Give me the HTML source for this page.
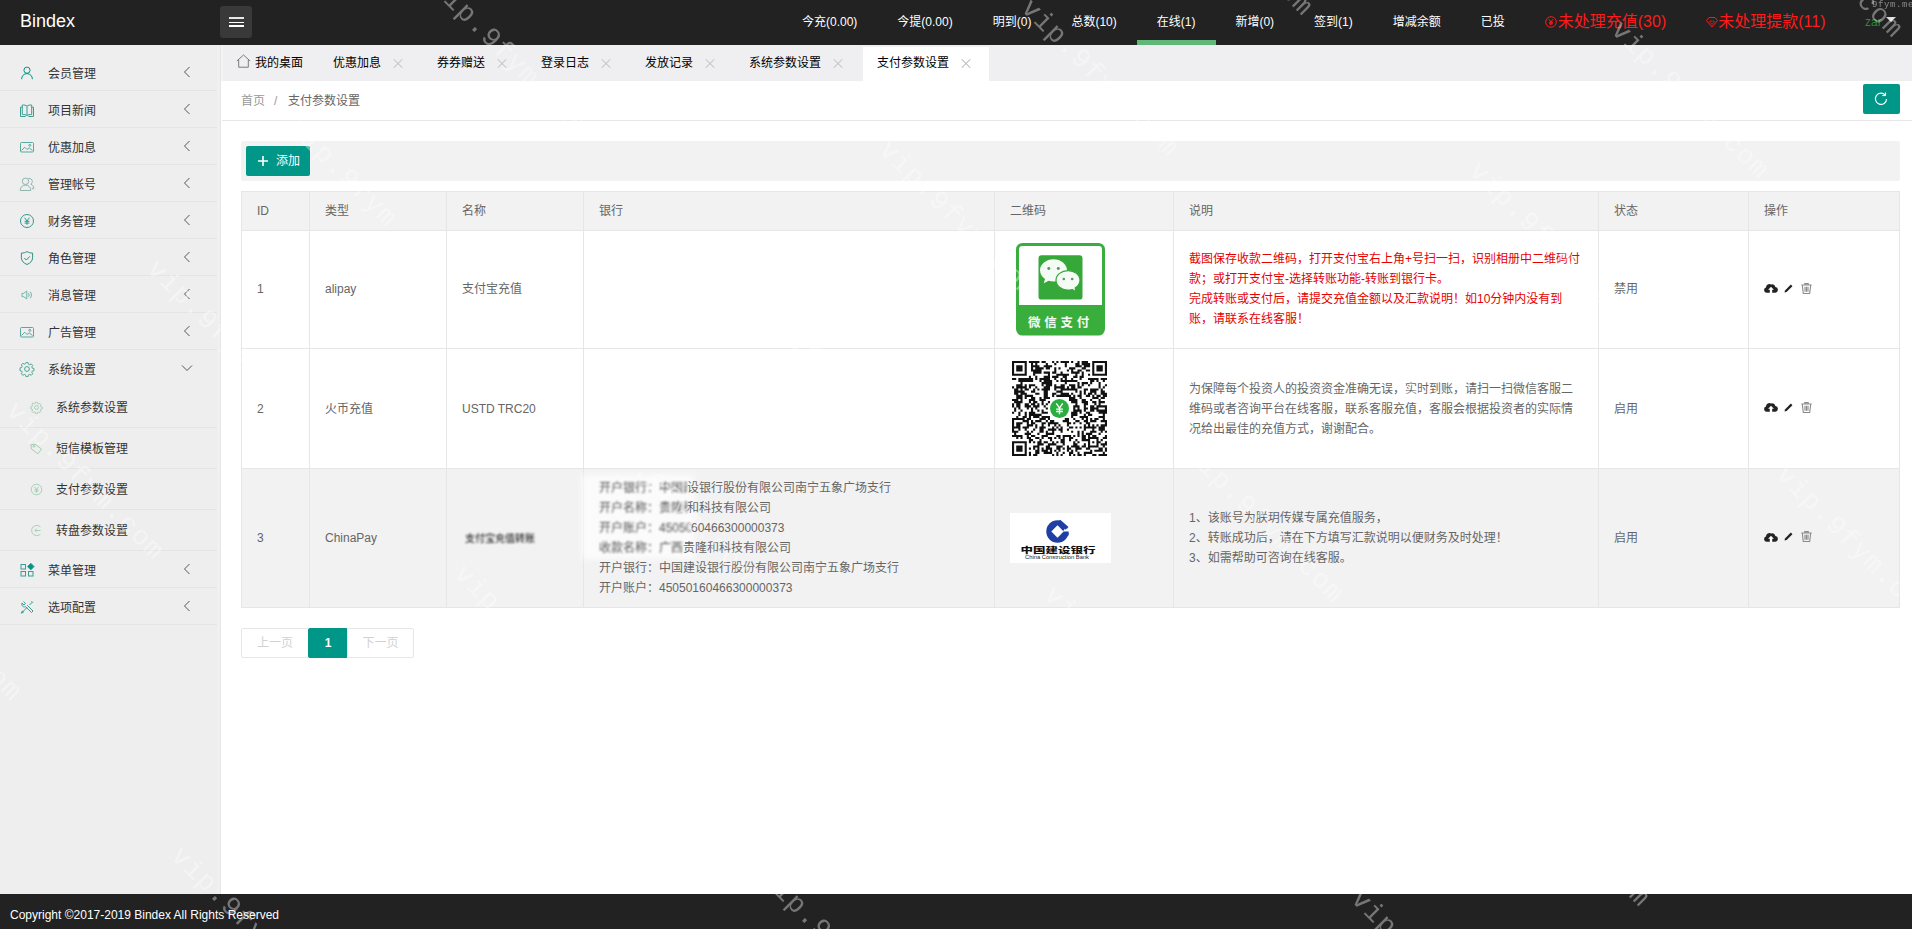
<!DOCTYPE html>
<html lang="zh-CN">
<head>
<meta charset="utf-8">
<title>Bindex</title>
<style>
*{box-sizing:border-box;margin:0;padding:0}
html,body{width:1912px;height:929px;overflow:hidden;background:#fff}
body{position:relative;font-family:"Liberation Sans","Noto Sans CJK SC",sans-serif;font-size:12px;color:#333;line-height:1}
ul{list-style:none}
.abs{position:absolute}
/* header */
#hd{position:absolute;left:0;top:0;width:1912px;height:45px;background:#222}
#logo{position:absolute;left:20px;top:0;line-height:42px;font-size:18px;color:#fff}
#burger{position:absolute;left:220px;top:6px;width:32px;height:32px;background:#393939;border-radius:3px}
#burger i{position:absolute;left:9px;width:15px;height:2px;background:#fff}
#nav{position:absolute;left:782px;top:0;height:45px;display:flex}
#nav li{padding:0 20px;line-height:45px;color:#fff;font-size:12px;white-space:nowrap;position:relative;height:45px}
#nav li.on:after{content:"";position:absolute;left:0;right:-1px;bottom:0;height:5px;background:#5fb878}
#nav li.red{color:#ff1a1a;font-size:16px;line-height:44px}
/* sidebar */
#side{position:absolute;left:0;top:45px;width:220px;height:849px;background:#eee}
#side .it{position:absolute;left:0;width:220px;height:37px;border-bottom:1px solid #e4e4e4}
#side .it span{position:absolute;left:48px;top:2px;line-height:37px;font-size:12px;color:#333}
#side .it svg.ic{position:absolute;left:19px;top:11px;width:16px;height:16px}
#side .it svg.ar{position:absolute;left:182px;top:12px;width:10px;height:12px}
#side .sub{position:absolute;left:0;width:220px;height:41px;border-bottom:1px solid #e4e4e4}
#side .sub span{position:absolute;left:56px;top:1px;line-height:41px;font-size:12px;color:#333}
#side .sub svg.ic{position:absolute;left:30px;top:14px;width:13px;height:13px}
/* tabs */
#tabs{position:absolute;left:221px;top:45px;width:1691px;height:36px;background:#efeef0;border-left:2px solid #f4f4f5}
#tabs ul{display:flex;height:35px;margin-left:-1px}
#tabs li{padding:2px 15px 0;line-height:35px;font-size:12px;color:#000;white-space:nowrap;height:35px;position:relative;display:flex;align-items:center}
#tabs li.on{background:#fff;height:34px;margin:2px 1px 0;padding:0 14px 1px;line-height:33px}
#tabs li .x{display:inline-block;width:18px;height:18px;margin-left:8px;position:relative}
#tabs li .x:before,#tabs li .x:after{content:"";position:absolute;left:3px;top:8.5px;width:12px;height:1px;background:#c2c2c2;transform:rotate(45deg)}
#tabs li .x:after{transform:rotate(-45deg)}
#tabs li.on .x:before,#tabs li.on .x:after{background:#b5b5b5}
/* breadcrumb */
#bc{position:absolute;left:222px;top:81px;width:1690px;height:40px;background:#fff;border-bottom:1px solid #e6e6e6}
#bc .t{position:absolute;top:0;line-height:40px;font-size:12px}
#refresh{position:absolute;left:1863px;top:84px;width:37px;height:30px;background:#009688;border-radius:2px}
/* toolbar */
#tb{position:absolute;left:241px;top:141px;width:1659px;height:40px;background:#f2f2f2;border-radius:2px}
#add{position:absolute;left:246px;top:146px;width:64px;height:30px;background:#009688;border-radius:2px;color:#fff;font-size:12px;line-height:30px}
/* table */
#tbl{position:absolute;left:241px;top:191px;width:1658px;border-collapse:collapse;table-layout:fixed;font-size:12px;color:#666}
#tbl th,#tbl td{border:1px solid #e6e6e6;padding:0 15px;text-align:left;font-weight:normal;vertical-align:middle;line-height:20px}
#tbl th{background:#f2f2f2;height:39px}
#tbl tr.h td{background:#f2f2f2}
#tbl tr.r1 td{padding-bottom:2px}
#tbl tr.r1 .ops{top:-.5px}
.red{color:#e60000}
#tbl td.im{position:relative;padding:0}
.ops{display:flex;align-items:center;position:relative;top:-1.5px}
.bl{display:inline-block;overflow:hidden;white-space:nowrap;vertical-align:top;height:20px;filter:blur(1px);opacity:.85;color:#333;position:relative}
.blur1{display:inline-block;filter:blur(.9px);font-size:10px;color:#000;white-space:nowrap;position:relative;left:3px}
#tbl td.bank{position:relative}
.smear{position:absolute;left:-2px;top:6px;width:112px;height:84px;background:#fff;opacity:.75;filter:blur(3px)}
.bank .tx{position:relative}
/* pager */
#pg{position:absolute;left:241px;top:628px;height:30px;display:flex;font-size:12px}
#pg div{height:30px;line-height:28px;border:1px solid #e6e6e6;margin-left:-1px;color:#d2d2d2;text-align:center;background:#fff}
#pg div.cur{background:#009688;color:#fff;border-color:#009688;font-weight:bold;border-radius:2px}
#pg div:first-child{border-radius:2px 0 0 2px}
#pg div:last-child{border-radius:0 2px 2px 0}
/* footer */
#ft{position:absolute;left:0;top:894px;width:1912px;height:35px;background:#222;color:#fff;font-size:12px;line-height:43px;padding-left:10px}
.wm{position:absolute;font-family:"Liberation Mono",monospace;font-size:27px;letter-spacing:1.4px;line-height:28px;color:#fff;transform-origin:0 50%;transform:rotate(45deg);white-space:nowrap;pointer-events:none}
#wms{position:absolute;left:0;top:0;width:1912px;height:929px;overflow:hidden;pointer-events:none}
#wms{position:absolute;left:0;top:0;width:1912px;height:929px;overflow:hidden;pointer-events:none}
</style>
</head>
<body>
<div id="hd">
  <div id="logo">Bindex</div>
  <div id="burger"><i style="top:11px;height:2px;opacity:.88"></i><i style="top:15.5px;height:1.3px"></i><i style="top:19.3px;height:1.3px"></i></div>
  <ul id="nav">
    <li>今充(0.00)</li><li>今提(0.00)</li><li>明到(0)</li><li>总数(10)</li><li class="on">在线(1)</li><li>新增(0)</li><li>签到(1)</li><li>增减余额</li><li>已投</li><li class="red"><svg viewBox="0 0 12 12" style="width:12px;height:12px;vertical-align:-1px;margin-right:1px" fill="none" stroke="#ff1a1a" stroke-width="1"><circle cx="6" cy="6" r="5.300"/><path d="M4 3.300L6 6l2-2.700M6 6v3.300M4 6.300h4M4 7.800h4"/></svg>未处理充值(30)</li><li class="red"><svg viewBox="0 0 12 12" style="width:12px;height:12px;vertical-align:-1px;margin-right:0px" fill="none" stroke="#ff1a1a" stroke-width="1"><path d="M3 1.500h6l2.500 3L6 11 0.500 4.500z"/><path d="M6 8.500L4 6.300c-.6-.9.300-1.900 1.100-1.500.4.200.7.500.9.900.2-.4.500-.7.900-.9.800-.4 1.700.6 1.100 1.500z" stroke-width=".8"/></svg>未处理提款(11)</li>
  </ul>
  <div class="abs" style="left:1865px;top:15px;font-size:12px;color:#2a8a38;line-height:14px">zar</div>
  <div class="abs" style="left:1886px;top:17px;width:0;height:0;border:5px solid transparent;border-top:5px solid #ddd"></div>
</div>
<div id="side">
<div class="it" style="top:9px"><svg class="ic" viewBox="0 0 16 16" fill="none" stroke="#009688" stroke-width="1"><circle cx="8" cy="5.2" r="3.1"/><path d="M2.6 14.2c0-3.2 2.3-5.6 5.4-5.6s5.4 2.4 5.4 5.6"/></svg><span>会员管理</span><svg class="ar" viewBox="0 0 10 12"><path d="M7.500 1L2.500 6l5 5" fill="none" stroke="#555" stroke-width="1"/></svg></div>
<div class="it" style="top:46px"><svg class="ic" viewBox="0 0 16 16" fill="none" stroke="#3a9d94" stroke-width="1"><path d="M8 4.2v9.3M8 4.2C7 3.2 5.2 2.8 3.3 3v9.6c1.9-.2 3.7.2 4.7.9M8 4.2c1-1 2.8-1.4 4.7-1.2v9.6c-1.900-.2-3.700.2-4.700.9M3.300 5.200H1.500v9.300h5.100M12.700 5.200h1.800v9.300h-5.100"/></svg><span>项目新闻</span><svg class="ar" viewBox="0 0 10 12"><path d="M7.500 1L2.500 6l5 5" fill="none" stroke="#555" stroke-width="1"/></svg></div>
<div class="it" style="top:83px"><svg class="ic" viewBox="0 0 16 16" fill="none" stroke="#5aa9a1" stroke-width="1"><rect x="1.500" y="3.500" width="13" height="9.500" rx="1"/><path d="M2.500 11.500l3.200-3.300 2.300 2.300 2.200-1.600 3.300 2.600"/><circle cx="10.800" cy="6.300" r="1"/></svg><span>优惠加息</span><svg class="ar" viewBox="0 0 10 12"><path d="M7.500 1L2.500 6l5 5" fill="none" stroke="#555" stroke-width="1"/></svg></div>
<div class="it" style="top:120px"><svg class="ic" viewBox="0 0 16 16" fill="none" stroke="#8fb5ae" stroke-width="1"><circle cx="6.500" cy="5.300" r="3.200"/><path d="M1.200 14.500c0-3 2-5.400 5.300-5.400s5.300 2.400 5.300 5.400zM9.300 2.500c2.400-.5 4 1 4 2.900 0 1.300-.6 2.200-1.500 2.800 1.800.6 3 2.200 3 4.500h-2"/></svg><span>管理帐号</span><svg class="ar" viewBox="0 0 10 12"><path d="M7.500 1L2.500 6l5 5" fill="none" stroke="#555" stroke-width="1"/></svg></div>
<div class="it" style="top:157px"><svg class="ic" viewBox="0 0 16 16" fill="none" stroke="#2f9b8e" stroke-width="1"><circle cx="8" cy="8" r="6.500"/><path d="M5.600 4.700L8 8l2.400-3.300M8 8v3.800M5.600 8.300h4.800M5.600 10.100h4.800"/></svg><span>财务管理</span><svg class="ar" viewBox="0 0 10 12"><path d="M7.500 1L2.500 6l5 5" fill="none" stroke="#555" stroke-width="1"/></svg></div>
<div class="it" style="top:194px"><svg class="ic" viewBox="0 0 16 16" fill="none" stroke="#2f8f80" stroke-width="1"><path d="M8 1.600c1.700 1 3.600 1.500 5.600 1.500v4.600c0 3.100-2.200 5.500-5.600 6.800-3.400-1.300-5.600-3.700-5.600-6.800V3.100c2 0 3.900-.5 5.600-1.500z"/><path d="M5.300 8l2 2 3.500-3.600"/></svg><span>角色管理</span><svg class="ar" viewBox="0 0 10 12"><path d="M7.500 1L2.500 6l5 5" fill="none" stroke="#555" stroke-width="1"/></svg></div>
<div class="it" style="top:231px"><svg class="ic" viewBox="0 0 16 16" fill="none" stroke="#6fb3a8" stroke-width="1"><path d="M3 6.300h1.800L7.800 4v8L4.800 9.700H3z"/><path d="M9.500 6.200c.8.900.8 2.700 0 3.600M11.200 4.700c1.600 1.700 1.600 4.900 0 6.600"/></svg><span>消息管理</span><svg class="ar" viewBox="0 0 10 12"><path d="M7.500 1L2.500 6l5 5" fill="none" stroke="#555" stroke-width="1"/></svg></div>
<div class="it" style="top:268px"><svg class="ic" viewBox="0 0 16 16" fill="none" stroke="#5aa9a1" stroke-width="1"><rect x="1.500" y="3.500" width="13" height="9.500" rx="1"/><path d="M2.500 11.500l3.200-3.300 2.300 2.300 2.200-1.600 3.300 2.600"/><circle cx="10.800" cy="6.300" r="1"/></svg><span>广告管理</span><svg class="ar" viewBox="0 0 10 12"><path d="M7.500 1L2.500 6l5 5" fill="none" stroke="#555" stroke-width="1"/></svg></div>
<div class="it" style="top:305px;border-bottom:0"><svg class="ic" viewBox="0 0 16 16" fill="none" stroke="#4aa896" stroke-width="1"><circle cx="8" cy="8" r="2.400"/><path d="M6.900 1.600h2.200l.4 1.700 1.200.5 1.500-.9 1.500 1.500-.9 1.500.5 1.200 1.700.4v2.200l-1.700.4-.5 1.200.9 1.500-1.500 1.500-1.500-.9-1.200.5-.4 1.700H6.900l-.4-1.700-1.200-.5-1.500.9-1.500-1.500.9-1.500-.5-1.200-1.700-.4V6.900l1.700-.4.500-1.200-.9-1.500 1.500-1.500 1.500.9 1.200-.5z"/></svg><span>系统设置</span><svg class="ar" style="width:12px;height:10px;left:181px;top:13px" viewBox="0 0 12 10"><path d="M1 2.500l5 5 5-5" fill="none" stroke="#555" stroke-width="1"/></svg></div>
<div class="sub" style="top:342px"><svg class="ic" viewBox="0 0 16 16" fill="none" stroke="#9ccdb0" stroke-width="1.100"><circle cx="8" cy="8" r="2.400"/><path d="M6.900 1.600h2.200l.4 1.700 1.200.5 1.500-.9 1.500 1.500-.9 1.500.5 1.200 1.700.4v2.200l-1.700.4-.5 1.200.9 1.500-1.500 1.500-1.500-.9-1.200.5-.4 1.700H6.900l-.4-1.700-1.200-.5-1.500.9-1.500-1.500.9-1.500-.5-1.200-1.700-.4V6.900l1.700-.4.500-1.200-.9-1.500 1.500-1.500 1.500.9 1.200-.5z"/></svg><span>系统参数设置</span></div>
<div class="sub" style="top:383px"><svg class="ic" viewBox="0 0 16 16" fill="none" stroke="#9ccdb0" stroke-width="1.100"><path d="M1.800 2.500h5.200l7 7-5.200 5.200-7-7z" transform="rotate(-8 8 8)"/><circle cx="4.800" cy="5.200" r="1.200"/></svg><span>短信模板管理</span></div>
<div class="sub" style="top:424px"><svg class="ic" viewBox="0 0 16 16" fill="none" stroke="#9ccdb0" stroke-width="1.100"><circle cx="8" cy="8" r="6.500"/><path d="M5.600 4.700L8 8l2.400-3.300M8 8v3.800M5.600 8.300h4.800M5.600 10.100h4.800"/></svg><span>支付参数设置</span></div>
<div class="sub" style="top:465px"><svg class="ic" viewBox="0 0 16 16" fill="none" stroke="#9ccdb0" stroke-width="1.100"><path d="M12.800 3.600A6.300 6.300 0 1 0 12.800 12.400"/><path d="M6 8h7M6 8l2.200-2M6 8l2.200 2"/></svg><span>转盘参数设置</span></div>
<div class="it" style="top:506px"><svg class="ic" viewBox="0 0 16 16" fill="none" stroke="#3a9d94" stroke-width="1"><rect x="2" y="2.500" width="4.500" height="4.500"/><rect x="2" y="9.500" width="4.500" height="4.500"/><rect x="9.500" y="9.500" width="4.500" height="4.500"/><path d="M11.800 1.300l3.300 3.300-3.300 3.300-3.300-3.300z" fill="#009688"/></svg><span>菜单管理</span><svg class="ar" viewBox="0 0 10 12"><path d="M7.500 1L2.500 6l5 5" fill="none" stroke="#555" stroke-width="1"/></svg></div>
<div class="it" style="top:543px"><svg class="ic" viewBox="0 0 16 16" fill="none" stroke="#3a9d94" stroke-width="1"><path d="M3 13.500l5-5M10.500 6l3.200-3.200M4.500 2.500l2 2-1.500 1.500-2-2c-.5 1.500 0 2.800 1 3.500 1 .6 2 .5 2.700.2l5.800 5.800 1.500-1.500-5.800-5.800M2.300 14.200l1-2.200 1.200 1.200zM12.500 2.300l1.200 1.200"/></svg><span>选项配置</span><svg class="ar" viewBox="0 0 10 12"><path d="M7.500 1L2.500 6l5 5" fill="none" stroke="#555" stroke-width="1"/></svg></div>
</div><!--/side-->
<div class="abs" style="left:217px;top:45px;width:3px;height:849px;background:#f0f0f0"></div><div class="abs" style="left:220px;top:45px;width:1px;height:849px;background:#e6e6e6"></div>
<div id="tabs"><ul>
  <li><svg viewBox="0 0 14 13" style="width:15px;height:14px;margin-right:4px;margin-left:-1px;margin-top:-5px" fill="none" stroke="#777" stroke-width=".9"><path d="M0.800 6.500L7 0.900l6.200 5.600M2.500 5.200v7.100h9V5.200"/></svg>我的桌面</li>
  <li>优惠加息<i class="x"></i></li>
  <li>券券赠送<i class="x"></i></li>
  <li>登录日志<i class="x"></i></li>
  <li>发放记录<i class="x"></i></li>
  <li>系统参数设置<i class="x"></i></li>
  <li class="on">支付参数设置<i class="x"></i></li>
</ul></div>
<div id="bc"><span class="t" style="left:19px;color:#999">首页</span><span class="t" style="left:52px;color:#999">/</span><span class="t" style="left:66px;color:#666">支付参数设置</span></div>
<div id="refresh"><svg viewBox="0 0 14 14" style="position:absolute;left:11px;top:8px;width:14px;height:14px" fill="none" stroke="#fff" stroke-width="1.200"><path d="M11.300 3.200A5.600 5.600 0 1 0 12.600 7"/><path d="M8.300 3.600h3.300V0.400" stroke-width="1"/></svg></div>
<div id="tb"></div>
<div id="add"><svg viewBox="0 0 10 10" style="position:absolute;left:12px;top:10px;width:10px;height:10px"><path d="M5 0v10M0 5h10" stroke="#fff" stroke-width="1.600"/></svg><span style="position:absolute;left:30px">添加</span></div>
<table id="tbl">
<colgroup><col style="width:68px"><col style="width:137px"><col style="width:137px"><col style="width:411px"><col style="width:179px"><col style="width:425px"><col style="width:150px"><col style="width:151px"></colgroup>
<tr><th>ID</th><th>类型</th><th>名称</th><th>银行</th><th>二维码</th><th>说明</th><th>状态</th><th>操作</th></tr>
<tr class="r1" style="height:118px"><td>1</td><td>alipay</td><td>支付宝充值</td><td></td><td class="im"><!--WX--><svg class="abs" style="left:21px;top:12px;width:89px;height:92.5px" viewBox="0 0 89 94" preserveAspectRatio="none"><rect x="1.500" y="1.500" width="86" height="91" rx="5" fill="#fff" stroke="#3aae3c" stroke-width="3"/><path d="M1.500 63h86v24.500a5 5 0 0 1-5 5h-76a5 5 0 0 1-5-5z" fill="#3aae3c"/><rect x="22.500" y="12.500" width="44" height="45" rx="3" fill="#36a83a"/><path d="M37.500 16.500c-7.500 0-13.500 5-13.500 11.300 0 3.600 2 6.800 5.100 8.900l-1.400 4.300 5-2.600c1.500.4 3.100.7 4.800.7 7.500 0 13.500-5 13.500-11.300S45 16.500 37.500 16.500z" fill="#f4fbf4"/><path d="M52 28c-6.600 0-12 4.400-12 9.900s5.400 9.900 12 9.900c1.400 0 2.800-.2 4-.6l4.300 2.300-1.200-3.700c2.900-1.800 4.900-4.700 4.900-7.900 0-5.500-5.400-9.900-12-9.900z" fill="#f4fbf4" stroke="#36a83a" stroke-width="1.200"/><circle cx="32.800" cy="26" r="1.500" fill="#5f8f62"/><circle cx="42.300" cy="26" r="1.500" fill="#5f8f62"/><circle cx="47.800" cy="36.500" r="1.300" fill="#5f8f62"/><circle cx="56.200" cy="36.500" r="1.300" fill="#5f8f62"/><text x="44.500" y="85" text-anchor="middle" font-family="'Liberation Sans','Noto Sans CJK SC',sans-serif" font-weight="bold" font-size="12.500" letter-spacing="3.800" fill="#f2faf2">微信支付</text></svg><!--/WX--></td><td class="red"><div>截图保存收款二维码，打开支付宝右上角+号扫一扫，识别相册中二维码付款；或打开支付宝-选择转账功能-转账到银行卡。<br>完成转账或支付后，请提交充值金额以及汇款说明！如10分钟内没有到账，请联系在线客服！</div></td><td>禁用</td><td><span class="ops"><svg viewBox="0 0 14 10" style="width:14px;height:10px"><path d="M11.300 4.100A3 3 0 0 0 7.200 1.600 3.400 3.400 0 0 0 2 4.600 2.600 2.600 0 0 0 2.700 9.700h8.200a2.800 2.800 0 0 0 .4-5.600z" fill="#222"/><path d="M7 3.800l2.900 3H8.200V10H5.800V6.800H4.100z" fill="#fff"/></svg><svg viewBox="0 0 10 10" style="width:9px;height:9px;margin-left:6px"><path d="M0.600 9.400l.5-2.300L7.600.6l1.800 1.800-6.500 6.500z" fill="#222"/></svg><svg viewBox="0 0 11 11" style="width:11px;height:11px;margin-left:8px"><path d="M0.300 2h10.400M3.800 1.700V.6h3.400v1.100M1.300 2.300l1 8.200h6.400l1-8.200M4 3.800v5M5.500 3.800v5M7 3.800v5" fill="none" stroke="#8a8a8a" stroke-width="1.100"/></svg></span></td></tr>
<tr style="height:120px"><td>2</td><td>火币充值</td><td>USTD TRC20</td><td></td><td class="im"><!--QR--><svg class="abs" style="left:17px;top:11.5px;width:95px;height:95px;filter:blur(.4px)" viewBox="0 0 45 45" shape-rendering="auto"><rect width="45" height="45" fill="#fff"/><path d="M0 0h7v1h-7zM8 0h5v1h-5zM14 0h2v1h-2zM19 0h1v1h-1zM21 0h1v1h-1zM23 0h4v1h-4zM28 0h1v1h-1zM31 0h1v1h-1zM33 0h3v1h-3zM38 0h7v1h-7zM0 1h1v1h-1zM6 1h1v1h-1zM9 1h1v1h-1zM11 1h1v1h-1zM16 1h1v1h-1zM20 1h1v1h-1zM25 1h1v1h-1zM30 1h2v1h-2zM33 1h4v1h-4zM38 1h1v1h-1zM44 1h1v1h-1zM0 2h1v1h-1zM2 2h3v1h-3zM6 2h1v1h-1zM9 2h4v1h-4zM15 2h4v1h-4zM25 2h1v1h-1zM30 2h3v1h-3zM34 2h3v1h-3zM38 2h1v1h-1zM40 2h3v1h-3zM44 2h1v1h-1zM0 3h1v1h-1zM2 3h3v1h-3zM6 3h1v1h-1zM9 3h1v1h-1zM11 3h4v1h-4zM16 3h2v1h-2zM20 3h1v1h-1zM22 3h1v1h-1zM27 3h3v1h-3zM33 3h2v1h-2zM38 3h1v1h-1zM40 3h3v1h-3zM44 3h1v1h-1zM0 4h1v1h-1zM2 4h3v1h-3zM6 4h1v1h-1zM9 4h5v1h-5zM20 4h1v1h-1zM26 4h1v1h-1zM28 4h1v1h-1zM31 4h2v1h-2zM35 4h2v1h-2zM38 4h1v1h-1zM40 4h3v1h-3zM44 4h1v1h-1zM0 5h1v1h-1zM6 5h1v1h-1zM10 5h4v1h-4zM15 5h3v1h-3zM19 5h2v1h-2zM23 5h1v1h-1zM28 5h4v1h-4zM33 5h1v1h-1zM38 5h1v1h-1zM44 5h1v1h-1zM0 6h7v1h-7zM10 6h1v1h-1zM17 6h1v1h-1zM21 6h6v1h-6zM30 6h1v1h-1zM33 6h1v1h-1zM36 6h1v1h-1zM38 6h7v1h-7zM8 7h1v1h-1zM11 7h1v1h-1zM15 7h3v1h-3zM19 7h3v1h-3zM24 7h2v1h-2zM29 7h2v1h-2zM32 7h2v1h-2zM0 8h2v1h-2zM3 8h7v1h-7zM11 8h1v1h-1zM13 8h5v1h-5zM20 8h1v1h-1zM23 8h1v1h-1zM25 8h1v1h-1zM28 8h1v1h-1zM32 8h1v1h-1zM36 8h5v1h-5zM42 8h3v1h-3zM3 9h7v1h-7zM13 9h1v1h-1zM15 9h4v1h-4zM21 9h1v1h-1zM23 9h8v1h-8zM37 9h2v1h-2zM40 9h1v1h-1zM43 9h1v1h-1zM4 10h1v1h-1zM14 10h5v1h-5zM25 10h1v1h-1zM31 10h1v1h-1zM33 10h3v1h-3zM37 10h1v1h-1zM41 10h1v1h-1zM2 11h3v1h-3zM6 11h1v1h-1zM8 11h3v1h-3zM14 11h1v1h-1zM16 11h3v1h-3zM20 11h1v1h-1zM23 11h2v1h-2zM27 11h3v1h-3zM31 11h1v1h-1zM33 11h1v1h-1zM36 11h1v1h-1zM41 11h1v1h-1zM44 11h1v1h-1zM0 12h1v1h-1zM2 12h5v1h-5zM8 12h1v1h-1zM11 12h1v1h-1zM15 12h3v1h-3zM20 12h5v1h-5zM26 12h1v1h-1zM28 12h2v1h-2zM31 12h2v1h-2zM41 12h1v1h-1zM43 12h1v1h-1zM1 13h2v1h-2zM4 13h1v1h-1zM6 13h2v1h-2zM10 13h1v1h-1zM12 13h1v1h-1zM14 13h4v1h-4zM20 13h1v1h-1zM23 13h8v1h-8zM34 13h2v1h-2zM37 13h4v1h-4zM42 13h1v1h-1zM1 14h5v1h-5zM9 14h2v1h-2zM15 14h2v1h-2zM21 14h3v1h-3zM30 14h1v1h-1zM32 14h1v1h-1zM34 14h1v1h-1zM37 14h3v1h-3zM42 14h2v1h-2zM1 15h2v1h-2zM4 15h3v1h-3zM11 15h2v1h-2zM15 15h2v1h-2zM19 15h2v1h-2zM23 15h4v1h-4zM28 15h1v1h-1zM32 15h1v1h-1zM34 15h1v1h-1zM36 15h2v1h-2zM39 15h1v1h-1zM42 15h3v1h-3zM2 16h3v1h-3zM6 16h4v1h-4zM15 16h2v1h-2zM19 16h1v1h-1zM21 16h7v1h-7zM29 16h1v1h-1zM31 16h2v1h-2zM35 16h2v1h-2zM38 16h1v1h-1zM40 16h2v1h-2zM43 16h2v1h-2zM2 17h3v1h-3zM6 17h1v1h-1zM9 17h2v1h-2zM13 17h1v1h-1zM15 17h3v1h-3zM27 17h3v1h-3zM32 17h1v1h-1zM38 17h3v1h-3zM42 17h2v1h-2zM0 18h3v1h-3zM4 18h1v1h-1zM8 18h3v1h-3zM13 18h3v1h-3zM27 18h4v1h-4zM33 18h2v1h-2zM37 18h1v1h-1zM41 18h1v1h-1zM1 19h4v1h-4zM8 19h1v1h-1zM10 19h2v1h-2zM14 19h1v1h-1zM17 19h1v1h-1zM28 19h3v1h-3zM33 19h3v1h-3zM38 19h2v1h-2zM41 19h3v1h-3zM0 20h1v1h-1zM2 20h2v1h-2zM6 20h2v1h-2zM9 20h2v1h-2zM12 20h1v1h-1zM14 20h1v1h-1zM16 20h1v1h-1zM30 20h1v1h-1zM34 20h2v1h-2zM39 20h1v1h-1zM41 20h1v1h-1zM0 21h1v1h-1zM2 21h2v1h-2zM6 21h3v1h-3zM10 21h3v1h-3zM15 21h1v1h-1zM29 21h3v1h-3zM34 21h1v1h-1zM37 21h2v1h-2zM40 21h5v1h-5zM1 22h1v1h-1zM3 22h1v1h-1zM7 22h1v1h-1zM9 22h1v1h-1zM11 22h1v1h-1zM16 22h1v1h-1zM29 22h1v1h-1zM31 22h1v1h-1zM34 22h2v1h-2zM37 22h4v1h-4zM44 22h1v1h-1zM1 23h1v1h-1zM4 23h1v1h-1zM9 23h1v1h-1zM12 23h1v1h-1zM14 23h1v1h-1zM29 23h4v1h-4zM34 23h1v1h-1zM37 23h2v1h-2zM40 23h5v1h-5zM0 24h1v1h-1zM3 24h1v1h-1zM6 24h1v1h-1zM8 24h3v1h-3zM14 24h3v1h-3zM28 24h3v1h-3zM32 24h1v1h-1zM35 24h2v1h-2zM41 24h4v1h-4zM3 25h1v1h-1zM6 25h1v1h-1zM8 25h6v1h-6zM28 25h3v1h-3zM34 25h1v1h-1zM36 25h2v1h-2zM43 25h1v1h-1zM2 26h1v1h-1zM5 26h2v1h-2zM8 26h1v1h-1zM10 26h3v1h-3zM14 26h4v1h-4zM28 26h1v1h-1zM32 26h4v1h-4zM41 26h3v1h-3zM0 27h6v1h-6zM7 27h2v1h-2zM13 27h3v1h-3zM17 27h1v1h-1zM25 27h2v1h-2zM29 27h1v1h-1zM33 27h1v1h-1zM35 27h1v1h-1zM37 27h1v1h-1zM39 27h2v1h-2zM43 27h1v1h-1zM0 28h1v1h-1zM5 28h3v1h-3zM9 28h1v1h-1zM11 28h3v1h-3zM16 28h1v1h-1zM18 28h2v1h-2zM24 28h3v1h-3zM30 28h2v1h-2zM34 28h2v1h-2zM37 28h3v1h-3zM42 28h3v1h-3zM0 29h1v1h-1zM2 29h3v1h-3zM7 29h1v1h-1zM9 29h2v1h-2zM14 29h2v1h-2zM17 29h5v1h-5zM26 29h2v1h-2zM29 29h1v1h-1zM32 29h1v1h-1zM35 29h2v1h-2zM44 29h1v1h-1zM0 30h1v1h-1zM2 30h2v1h-2zM7 30h3v1h-3zM11 30h1v1h-1zM14 30h1v1h-1zM17 30h1v1h-1zM20 30h1v1h-1zM22 30h1v1h-1zM26 30h1v1h-1zM34 30h1v1h-1zM36 30h1v1h-1zM38 30h1v1h-1zM40 30h1v1h-1zM42 30h3v1h-3zM0 31h4v1h-4zM5 31h3v1h-3zM11 31h1v1h-1zM13 31h3v1h-3zM19 31h1v1h-1zM21 31h1v1h-1zM23 31h1v1h-1zM27 31h2v1h-2zM30 31h1v1h-1zM32 31h1v1h-1zM34 31h6v1h-6zM41 31h3v1h-3zM0 32h1v1h-1zM3 32h1v1h-1zM6 32h1v1h-1zM10 32h1v1h-1zM13 32h2v1h-2zM17 32h4v1h-4zM22 32h2v1h-2zM26 32h1v1h-1zM34 32h1v1h-1zM38 32h1v1h-1zM41 32h3v1h-3zM0 33h3v1h-3zM7 33h1v1h-1zM9 33h1v1h-1zM13 33h2v1h-2zM16 33h1v1h-1zM19 33h1v1h-1zM23 33h1v1h-1zM28 33h1v1h-1zM31 33h1v1h-1zM33 33h1v1h-1zM37 33h3v1h-3zM42 33h1v1h-1zM44 33h1v1h-1zM1 34h1v1h-1zM6 34h3v1h-3zM12 34h1v1h-1zM16 34h4v1h-4zM31 34h1v1h-1zM33 34h1v1h-1zM35 34h3v1h-3zM41 34h1v1h-1zM0 35h5v1h-5zM7 35h1v1h-1zM9 35h2v1h-2zM14 35h3v1h-3zM21 35h2v1h-2zM24 35h4v1h-4zM29 35h1v1h-1zM31 35h1v1h-1zM33 35h2v1h-2zM36 35h1v1h-1zM38 35h2v1h-2zM44 35h1v1h-1zM2 36h1v1h-1zM4 36h1v1h-1zM7 36h2v1h-2zM11 36h2v1h-2zM14 36h1v1h-1zM17 36h2v1h-2zM20 36h1v1h-1zM22 36h1v1h-1zM24 36h1v1h-1zM27 36h2v1h-2zM33 36h2v1h-2zM36 36h5v1h-5zM43 36h2v1h-2zM8 37h2v1h-2zM13 37h1v1h-1zM18 37h1v1h-1zM23 37h2v1h-2zM27 37h1v1h-1zM30 37h1v1h-1zM33 37h4v1h-4zM40 37h1v1h-1zM42 37h1v1h-1zM0 38h7v1h-7zM8 38h1v1h-1zM10 38h1v1h-1zM12 38h2v1h-2zM15 38h2v1h-2zM19 38h1v1h-1zM21 38h1v1h-1zM23 38h2v1h-2zM29 38h1v1h-1zM31 38h1v1h-1zM36 38h1v1h-1zM38 38h1v1h-1zM40 38h2v1h-2zM44 38h1v1h-1zM0 39h1v1h-1zM6 39h1v1h-1zM12 39h3v1h-3zM17 39h4v1h-4zM24 39h1v1h-1zM29 39h2v1h-2zM34 39h1v1h-1zM36 39h1v1h-1zM40 39h1v1h-1zM42 39h3v1h-3zM0 40h1v1h-1zM2 40h3v1h-3zM6 40h1v1h-1zM10 40h3v1h-3zM16 40h2v1h-2zM21 40h3v1h-3zM26 40h1v1h-1zM28 40h4v1h-4zM33 40h2v1h-2zM36 40h5v1h-5zM43 40h1v1h-1zM0 41h1v1h-1zM2 41h3v1h-3zM6 41h1v1h-1zM8 41h1v1h-1zM10 41h1v1h-1zM12 41h1v1h-1zM14 41h1v1h-1zM16 41h3v1h-3zM21 41h2v1h-2zM24 41h1v1h-1zM26 41h2v1h-2zM30 41h3v1h-3zM35 41h2v1h-2zM41 41h2v1h-2zM44 41h1v1h-1zM0 42h1v1h-1zM2 42h3v1h-3zM6 42h1v1h-1zM11 42h2v1h-2zM14 42h3v1h-3zM18 42h1v1h-1zM20 42h1v1h-1zM22 42h1v1h-1zM26 42h1v1h-1zM28 42h1v1h-1zM30 42h1v1h-1zM37 42h1v1h-1zM39 42h4v1h-4zM44 42h1v1h-1zM0 43h1v1h-1zM6 43h1v1h-1zM8 43h1v1h-1zM11 43h2v1h-2zM15 43h4v1h-4zM21 43h1v1h-1zM24 43h1v1h-1zM27 43h2v1h-2zM31 43h1v1h-1zM34 43h4v1h-4zM43 43h1v1h-1zM0 44h7v1h-7zM8 44h1v1h-1zM10 44h2v1h-2zM19 44h1v1h-1zM21 44h1v1h-1zM23 44h1v1h-1zM27 44h1v1h-1zM29 44h1v1h-1zM31 44h2v1h-2zM34 44h1v1h-1zM38 44h2v1h-2zM41 44h4v1h-4z" fill="#111"/><circle cx="22.500" cy="22.500" r="5.100" fill="#fff"/><circle cx="22.500" cy="22.500" r="4.500" fill="#2aae3f"/><path d="M21 20.100l1.500 2.200 1.500-2.200M22.500 22.300v2.900M20.900 22.800h3.200M20.900 23.900h3.200" stroke="#fff" stroke-width=".65" fill="none"/></svg><!--/QR--></td><td>为保障每个投资人的投资资金准确无误，实时到账，请扫一扫微信客服二维码或者咨询平台在线客服，联系客服充值，客服会根据投资者的实际情况给出最佳的充值方式，谢谢配合。</td><td>启用</td><td><span class="ops"><svg viewBox="0 0 14 10" style="width:14px;height:10px"><path d="M11.300 4.100A3 3 0 0 0 7.200 1.600 3.400 3.400 0 0 0 2 4.600 2.600 2.600 0 0 0 2.700 9.700h8.200a2.800 2.800 0 0 0 .4-5.600z" fill="#222"/><path d="M7 3.800l2.900 3H8.200V10H5.800V6.800H4.100z" fill="#fff"/></svg><svg viewBox="0 0 10 10" style="width:9px;height:9px;margin-left:6px"><path d="M0.600 9.400l.5-2.300L7.600.6l1.800 1.800-6.500 6.500z" fill="#222"/></svg><svg viewBox="0 0 11 11" style="width:11px;height:11px;margin-left:8px"><path d="M0.300 2h10.400M3.800 1.700V.6h3.400v1.100M1.300 2.300l1 8.200h6.400l1-8.200M4 3.800v5M5.500 3.800v5M7 3.800v5" fill="none" stroke="#8a8a8a" stroke-width="1.100"/></svg></span></td></tr>
<tr class="h" style="height:139px"><td>3</td><td>ChinaPay</td><td><span class="blur1">支付宝充值转账</span></td><td class="bank"><div class="smear"></div><div class="tx"><span class="bl" style="width:88px">开户银行：中国建</span>设银行股份有限公司南宁五象广场支行<br><span class="bl" style="width:88px">开户名称：贵隆和</span>和科技有限公司<br><span class="bl" style="width:92px">开户账户：450501</span>60466300000373<br><span class="bl" style="width:84px">收款名称：广西</span>贵隆和科技有限公司<br>开户银行：中国建设银行股份有限公司南宁五象广场支行<br>开户账户：45050160466300000373</div></td><td class="im"><!--CCB--><svg class="abs" style="left:15px;top:44px;width:101px;height:50px" viewBox="0 0 101 50"><rect width="101" height="50" fill="#fff"/><circle cx="47.500" cy="18.500" r="11.200" fill="#1d3fa6"/><path d="M47.500 12.300l6.200 6.200-6.200 6.200-6.200-6.200z" fill="#fff"/><path d="M49 6l10.500 10.500V4z M53 18.500h7v-3.200h-5z" fill="#fff"/><path d="M48.600 8.200l1.600-1.500 8.300 7.300-3.200 2.800z" fill="#1d3fa6"/><path d="M54.300 19.600h4.300v3h-6z" fill="#1d3fa6"/><text x="48" y="40.300" text-anchor="middle" font-family="'Liberation Sans','Noto Sans CJK SC',sans-serif" font-weight="900" font-size="8" textLength="75" lengthAdjust="spacingAndGlyphs" fill="#111">中国建设银行</text><text x="47" y="46.200" text-anchor="middle" font-family="'Liberation Sans',sans-serif" font-size="5.200" textLength="64" lengthAdjust="spacingAndGlyphs" fill="#222">China Construction Bank</text></svg><!--/CCB--></td><td>1、该账号为朕玥传媒专属充值服务，<br>2、转账成功后，请在下方填写汇款说明以便财务及时处理！<br>3、如需帮助可咨询在线客服。</td><td>启用</td><td><span class="ops"><svg viewBox="0 0 14 10" style="width:14px;height:10px"><path d="M11.300 4.100A3 3 0 0 0 7.200 1.600 3.400 3.400 0 0 0 2 4.600 2.600 2.600 0 0 0 2.700 9.700h8.200a2.800 2.800 0 0 0 .4-5.600z" fill="#222"/><path d="M7 3.800l2.900 3H8.200V10H5.800V6.800H4.100z" fill="#fff"/></svg><svg viewBox="0 0 10 10" style="width:9px;height:9px;margin-left:6px"><path d="M0.600 9.400l.5-2.300L7.600.6l1.800 1.800-6.500 6.500z" fill="#222"/></svg><svg viewBox="0 0 11 11" style="width:11px;height:11px;margin-left:8px"><path d="M0.300 2h10.400M3.800 1.700V.6h3.400v1.100M1.300 2.300l1 8.200h6.400l1-8.200M4 3.800v5M5.500 3.800v5M7 3.800v5" fill="none" stroke="#8a8a8a" stroke-width="1.100"/></svg></span></td></tr>
</table>
<div id="pg"><div style="width:68px;margin-left:0">上一页</div><div class="cur" style="width:40px">1</div><div style="width:67px">下一页</div></div>
<div id="ft">Copyright ©2017-2019 Bindex All Rights Reserved</div>
<div id="wms"><div class="wm" style="left:-155.2px;top:-52.9px;opacity:0.38">vip.9fym.com</div><div class="wm" style="left:569.0px;top:-172.6px;opacity:0.38">vip.9fym.com</div><div class="wm" style="left:434.8px;top:-31.3px;opacity:0.38">vip.9fym.com</div><div class="wm" style="left:293.1px;top:110.0px;opacity:0.38">vip.9fym.com</div><div class="wm" style="left:151.4px;top:251.3px;opacity:0.38">vip.9fym.com</div><div class="wm" style="left:9.7px;top:392.6px;opacity:0.38">vip.9fym.com</div><div class="wm" style="left:-132.0px;top:533.9px;opacity:0.38">vip.9fym.com</div><div class="wm" style="left:1159.0px;top:-151.0px;opacity:0.38">vip.9fym.com</div><div class="wm" style="left:1024.8px;top:-9.7px;opacity:0.38">vip.9fym.com</div><div class="wm" style="left:883.1px;top:131.6px;opacity:0.38">vip.9fym.com</div><div class="wm" style="left:741.4px;top:272.9px;opacity:0.38">vip.9fym.com</div><div class="wm" style="left:599.7px;top:414.2px;opacity:0.38">vip.9fym.com</div><div class="wm" style="left:458.0px;top:555.5px;opacity:0.38">vip.9fym.com</div><div class="wm" style="left:316.3px;top:696.8px;opacity:0.38">vip.9fym.com</div><div class="wm" style="left:174.6px;top:838.1px;opacity:0.38">vip.9fym.com</div><div class="wm" style="left:1749.0px;top:-129.4px;opacity:0.38">vip.9fym.com</div><div class="wm" style="left:1614.8px;top:11.9px;opacity:0.38">vip.9fym.com</div><div class="wm" style="left:1473.1px;top:153.2px;opacity:0.38">vip.9fym.com</div><div class="wm" style="left:1331.4px;top:294.5px;opacity:0.38">vip.9fym.com</div><div class="wm" style="left:1189.7px;top:435.8px;opacity:0.38">vip.9fym.com</div><div class="wm" style="left:1048.0px;top:577.1px;opacity:0.38">vip.9fym.com</div><div class="wm" style="left:906.3px;top:718.4px;opacity:0.38">vip.9fym.com</div><div class="wm" style="left:764.6px;top:859.7px;opacity:0.38">vip.9fym.com</div><div class="wm" style="left:1921.4px;top:316.1px;opacity:0.38">vip.9fym.com</div><div class="wm" style="left:1779.7px;top:457.4px;opacity:0.38">vip.9fym.com</div><div class="wm" style="left:1638.0px;top:598.7px;opacity:0.38">vip.9fym.com</div><div class="wm" style="left:1496.3px;top:740.0px;opacity:0.38">vip.9fym.com</div><div class="wm" style="left:1354.6px;top:881.3px;opacity:0.38">vip.9fym.com</div><div class="abs" style="left:1872px;top:0;font:9px/10px 'Liberation Mono',monospace;color:#fff;opacity:.45;letter-spacing:.6px">9fym.me</div></div>
</body>
</html>
